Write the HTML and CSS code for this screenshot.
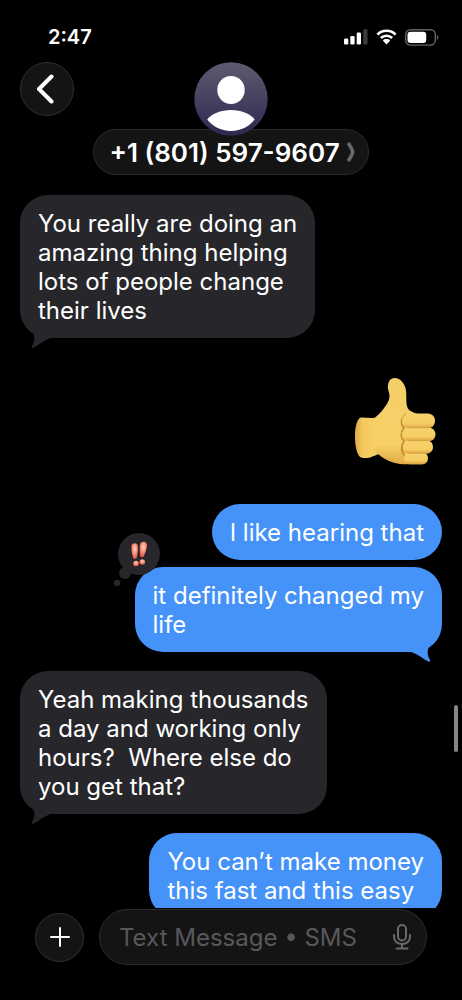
FILE: index.html
```html
<!DOCTYPE html>
<html lang="en">
<head>
<meta charset="utf-8">
<meta name="viewport" content="width=device-width, initial-scale=1">
<title>Messages</title>
<link rel="stylesheet" href="styles.css">
</head>
<body>
<div class="phone">
  <div class="status">
    <time class="clock">2:47</time>
    <div class="indicators">
      <svg class="signal" viewBox="0 0 24 16" aria-hidden="true">
        <rect x="0" y="9.5" width="4.3" height="6" rx="1.3"/>
        <rect x="6.3" y="7" width="4.3" height="8.5" rx="1.3"/>
        <rect x="12.7" y="3.5" width="4.3" height="12" rx="1.3"/>
        <rect class="dim" x="19.2" y="0.3" width="4.3" height="15.2" rx="1.3"/>
      </svg>
      <svg class="wifi" viewBox="0 0 21 16" aria-hidden="true">
        <path class="arc" d="M1.4 5.6C6.4.5 14.600.5 19.600 5.600M4.900 9C8 6 13 6 16.100 9"/>
        <path d="M10.500 10C8.900 10 7.700 10.500 6.800 11.400L10.500 15.400 14.200 11.400C13.300 10.500 12.100 10 10.500 10Z"/>
      </svg>
      <svg class="battery" viewBox="0 0 34 17" aria-hidden="true">
        <rect class="case" x="0.700" y="0.700" width="29.600" height="15.400" rx="4.800"/>
        <rect x="2.500" y="2.700" width="18.700" height="11.400" rx="3"/>
        <path class="cap" d="M31.800 6C34 6.800 34 10 31.800 10.800Z"/>
      </svg>
    </div>
  </div>

  <header class="header">
    <button class="round back" aria-label="Back">
      <svg viewBox="0 0 18 30" aria-hidden="true"><path d="M15.500 2.500 3 15 15.500 27.500"/></svg>
    </button>
    <div class="contact">
      <svg class="avatar" viewBox="0 0 74 74" aria-hidden="true">
        <defs>
          <linearGradient id="avatar-bg" x1="0" y1="0" x2="0" y2="1">
            <stop offset="0" stop-color="#5d5b70"/><stop offset="1" stop-color="#2e2850"/>
          </linearGradient>
        </defs>
        <circle cx="37" cy="37" r="36.700" fill="url(#avatar-bg)"/>
        <ellipse cx="37" cy="28" rx="13.700" ry="14" fill="#fff"/>
        <path d="M13.200 57.500C17 52 27 48 37 48S57 52 60.600 57.500C56 64 47 69 37 69S18 64 13.200 57.500Z" fill="#fff"/>
      </svg>
      <button class="name">+1 (801) 597-9607
        <svg viewBox="0 0 8 20" aria-hidden="true"><path d="M2 2.200Q4.600 6 5.800 10 4.600 14 2 17.800"/></svg>
      </button>
    </div>
  </header>

  <main class="chat">
    <p class="bubble received">You really are doing an<br>amazing thing helping<br>lots of people change<br>their lives
      <svg class="tail" viewBox="0 0 24 22" aria-hidden="true"><path d="M1 2C5 6 6.700 9 6.400 13 6.200 16 5 18 3.800 20.400 3.600 21.500 4.500 22 5.500 21.500 11 19 16 14 23 12L23 2Z"/></svg>
    </p>

    <svg class="thumb" viewBox="0 0 82 90" role="img" aria-label="Thumbs up">
      <defs>
        <linearGradient id="skin" gradientUnits="userSpaceOnUse" x1="0" y1="0" x2="0" y2="90">
          <stop offset="0" stop-color="#f3cf68"/><stop offset="0.750" stop-color="#f7d067"/><stop offset="1" stop-color="#dda53f"/>
        </linearGradient>
        <linearGradient id="cuff" gradientUnits="userSpaceOnUse" x1="0" y1="0" x2="30" y2="0">
          <stop offset="0" stop-color="#dca443"/><stop offset="0.300" stop-color="#f5ca60"/><stop offset="1" stop-color="#f7d067"/>
        </linearGradient>
        <linearGradient id="finger" x1="0" y1="0" x2="0" y2="1">
          <stop offset="0" stop-color="#f6d36b"/><stop offset="0.700" stop-color="#f5cd62"/><stop offset="1" stop-color="#d89e3e"/>
        </linearGradient>
      </defs>
      <path fill="url(#cuff)" d="M6.500 40.500C12 40 18 42 25 40L30 75C22 77 16 83 7 80.500-1 76-1 44 6.500 40.500Z"/>
      <path fill="url(#skin)" d="M19 42C24 39 30 32 33.500 26 37 20 35 16 34 12 33.500 6 35 2 40 1 46 .5 50.500 6 52 13 53 21 51 28 55 33 60 37 68 36 69 44L69 80C63 88 50 88.500 41 86 32 84 25 78 19 73Z"/>
      <path class="shadow" d="M52 37C46 43 47 48 50 51 46 56 47 61 50 64 47 69 47 75 52 80"/>
      <rect x="50" y="75" width="24" height="12.500" rx="6" fill="url(#finger)"/>
      <rect x="49" y="63.200" width="30" height="13.500" rx="6.500" fill="url(#finger)"/>
      <rect x="48.500" y="50.500" width="33" height="13.700" rx="6.800" fill="url(#finger)"/>
      <rect x="48" y="36.500" width="33" height="14.800" rx="7.200" fill="url(#finger)"/>
    </svg>

    <p class="bubble sent">I like hearing that</p>

    <p class="bubble sent follow">it definitely changed my<br>life
      <svg class="tail" viewBox="0 0 24 22" aria-hidden="true"><path d="M1 2C5 6 6.700 9 6.400 13 6.200 16 5 18 3.800 20.400 3.600 21.500 4.500 22 5.500 21.500 11 19 16 14 23 12L23 2Z"/></svg>
      <svg class="reaction" viewBox="0 0 48 56" role="img" aria-label="Emphasized">
        <defs>
          <radialGradient id="mark" cx="0.500" cy="0.350" r="0.650">
            <stop offset="0" stop-color="#ffd3c2"/><stop offset="0.550" stop-color="#f58a72"/><stop offset="1" stop-color="#df5645"/>
          </radialGradient>
        </defs>
        <g fill="#27272b">
          <circle cx="26" cy="21" r="21"/><circle cx="12" cy="40" r="6"/><circle cx="4" cy="50" r="3.200"/>
        </g>
        <g fill="url(#mark)">
          <path d="M18.400 13.200C18.600 9.700 23.800 9 24.800 12.500 25.400 16 24.700 20 24 24 23.600 26.500 20.500 26.500 20 24.500 19 20.500 18.300 17 18.400 13.200Z"/>
          <path d="M27 11.600C27.700 8 33.500 7.800 34 11.500 34.200 15 32.500 19 31 22.700 30 25 27.200 24.500 27 22.500 26.700 18.500 26.500 15 27 11.600Z"/>
          <circle cx="23" cy="30.500" r="2.800"/><circle cx="29.300" cy="29" r="2.800"/>
        </g>
      </svg>
    </p>

    <p class="bubble received">Yeah making thousands<br>a day and working only<br>hours?&nbsp; Where else do<br>you get that?
      <svg class="tail" viewBox="0 0 24 22" aria-hidden="true"><path d="M1 2C5 6 6.700 9 6.400 13 6.200 16 5 18 3.800 20.400 3.600 21.500 4.500 22 5.500 21.500 11 19 16 14 23 12L23 2Z"/></svg>
    </p>

    <p class="bubble sent">You can’t make money<br>this fast and this easy</p>
    <div class="scrollbar"></div>
  </main>

  <form class="composer">
    <button class="round add" type="button" aria-label="Add attachment">
      <svg viewBox="0 0 20 20" aria-hidden="true"><path d="M10 1V19M1 10H19"/></svg>
    </button>
    <div class="field">
      <input type="text" aria-label="Message" placeholder="Text Message • SMS">
      <button class="mic" type="button" aria-label="Dictate">
        <svg viewBox="0 0 18 26" aria-hidden="true"><rect x="5" y="1" width="8" height="15.500" rx="4"/><path d="M1 11V12.500C1 17.500 4.500 20 9 20S17 17.500 17 12.500V11M9 20V24.500M3.500 24.500H14.500"/></svg>
      </button>
    </div>
  </form>
</div>
</body>
</html>
```
FILE: styles.css
```css
* { box-sizing: border-box; }

body {
  margin: 0;
  background: #000;
  color: #fff;
  font-family: Inter, "Liberation Sans", sans-serif;
}

button, input {
  margin: 0;
  font: inherit;
  color: inherit;
}

svg { display: block; flex: none; }

.phone {
  display: flex;
  flex-direction: column;
  height: 100vh;
}

.status {
  display: flex;
  justify-content: space-between;
  align-items: center;
  height: 62px;
  padding: 12px 23px 0 48px;
}

.clock {
  font-size: 20px;
  font-weight: 600;
}

.indicators {
  display: flex;
  align-items: center;
  gap: 8px;
  fill: #fff;
}

.signal { width: 24px; height: 16px; }
.signal .dim { fill: #3a3a3c; }
.wifi { width: 21px; height: 16px; }
.wifi .arc { fill: none; stroke: #fff; stroke-width: 2.6; }
.battery { width: 34px; height: 17px; }
.battery .case { fill: none; stroke: #636366; stroke-width: 1.4; }
.battery .cap { fill: #636366; }

.header {
  display: grid;
  grid-template-columns: 54px 1fr 54px;
  align-items: start;
  padding: 0 20px;
}

.round {
  display: flex;
  align-items: center;
  justify-content: center;
  padding: 0;
  border: 1px solid #303032;
  border-radius: 50%;
  background: #141414;
}

.round svg, .name svg, .mic svg {
  fill: none;
  stroke: #fff;
  stroke-linecap: round;
  stroke-linejoin: round;
}

.back { width: 54px; height: 54px; }
.back svg { width: 18px; height: 30px; margin-right: 4px; stroke-width: 4; }

.contact {
  display: flex;
  flex-direction: column;
  align-items: center;
}

.avatar {
  position: relative;
  z-index: 1;
  width: 74px;
  height: 74px;
  margin-bottom: -7px;
}

.name {
  display: flex;
  align-items: center;
  gap: 7px;
  height: 46px;
  padding: 0 13px 0 15px;
  border: 1px solid #2a2a2c;
  border-radius: 23px;
  background: #141414;
  font-size: 26px;
  font-weight: 600;
  white-space: nowrap;
}

.name svg { width: 8px; height: 20px; stroke: #69696d; stroke-width: 3.6; }

.chat {
  position: relative;
  display: flex;
  flex: 1;
  flex-direction: column;
  min-height: 0;
  overflow: hidden;
  padding: 20px 20px 0;
}

.bubble {
  position: relative;
  flex: none;
  margin: 0 0 19px;
  padding: 14px 18px 13px;
  border-radius: 28px;
  font-size: 24px;
  line-height: 29px;
  white-space: nowrap;
}

.received {
  align-self: flex-start;
  background: #27272b;
  fill: #27272b;
}

.sent {
  align-self: flex-end;
  background: #4592f8;
  fill: #4592f8;
}

.tail {
  position: absolute;
  bottom: -10px;
  left: 8px;
  width: 24px;
  height: 22px;
}

.sent .tail {
  right: 8px;
  left: auto;
  transform: scaleX(-1);
}

.thumb {
  align-self: flex-end;
  width: 82px;
  height: 90px;
  margin: 20px 6px 37px 0;
}

.thumb .shadow {
  fill: none;
  stroke: #c98f38;
  stroke-width: 2;
}

.bubble:has(+ .follow) { margin-bottom: 7px; }

.reaction {
  position: absolute;
  top: -34px;
  left: -22px;
  width: 48px;
  height: 56px;
}

.scrollbar {
  position: absolute;
  top: 530px;
  right: 4px;
  width: 4px;
  height: 47px;
  border-radius: 2px;
  background: #858587;
}

.composer {
  display: flex;
  align-items: center;
  gap: 15px;
  padding: 1px 35px 35px;
}

.add { flex: none; width: 49px; height: 49px; }
.add svg { width: 20px; height: 20px; stroke-width: 2; }

.field {
  display: flex;
  flex: 1;
  align-items: center;
  min-width: 0;
  height: 56px;
  padding: 0 15px 0 19px;
  border: 1px solid #2c2c2e;
  border-radius: 28px;
  background: #141414;
}

.field input {
  flex: 1;
  min-width: 0;
  padding: 0;
  border: 0;
  outline: 0;
  background: transparent;
  font-size: 24px;
}

.field input::placeholder { color: #58585b; opacity: 1; }

.mic { padding: 0; border: 0; background: none; }
.mic svg { width: 18px; height: 26px; stroke: #69696c; stroke-width: 2; }
```
